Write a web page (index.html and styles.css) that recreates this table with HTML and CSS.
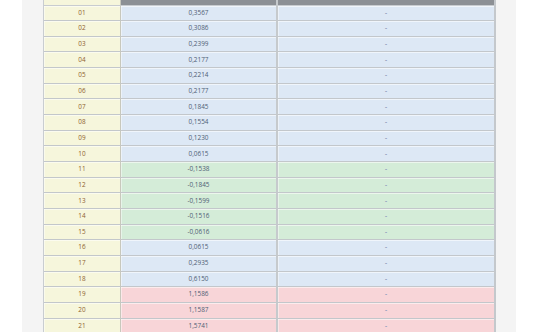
FILE: index.html
```html
<!DOCTYPE html>
<html>
<head>
<meta charset="utf-8">
<link rel="stylesheet" href="styles.css">
</head>
<body>
<div class="panel">
<table class="grid">
<thead><tr class="head"><th class="c1 h-blank"></th><th class="h-dark"></th><th class="h-dark c3"></th></tr></thead>
<tbody>
<tr class="blue"><td class="c1">01</td><td>0,3567</td><td class="c3">-</td></tr>
<tr class="blue"><td class="c1">02</td><td>0,3086</td><td class="c3">-</td></tr>
<tr class="blue"><td class="c1">03</td><td>0,2399</td><td class="c3">-</td></tr>
<tr class="blue"><td class="c1">04</td><td>0,2177</td><td class="c3">-</td></tr>
<tr class="blue"><td class="c1">05</td><td>0,2214</td><td class="c3">-</td></tr>
<tr class="blue"><td class="c1">06</td><td>0,2177</td><td class="c3">-</td></tr>
<tr class="blue"><td class="c1">07</td><td>0,1845</td><td class="c3">-</td></tr>
<tr class="blue"><td class="c1">08</td><td>0,1554</td><td class="c3">-</td></tr>
<tr class="blue"><td class="c1">09</td><td>0,1230</td><td class="c3">-</td></tr>
<tr class="blue"><td class="c1">10</td><td>0,0615</td><td class="c3">-</td></tr>
<tr class="green"><td class="c1">11</td><td>-0,1538</td><td class="c3">-</td></tr>
<tr class="green"><td class="c1">12</td><td>-0,1845</td><td class="c3">-</td></tr>
<tr class="green"><td class="c1">13</td><td>-0,1599</td><td class="c3">-</td></tr>
<tr class="green"><td class="c1">14</td><td>-0,1516</td><td class="c3">-</td></tr>
<tr class="green"><td class="c1">15</td><td>-0,0616</td><td class="c3">-</td></tr>
<tr class="blue"><td class="c1">16</td><td>0,0615</td><td class="c3">-</td></tr>
<tr class="blue"><td class="c1">17</td><td>0,2935</td><td class="c3">-</td></tr>
<tr class="blue"><td class="c1">18</td><td>0,6150</td><td class="c3">-</td></tr>
<tr class="pink"><td class="c1">19</td><td>1,1586</td><td class="c3">-</td></tr>
<tr class="pink"><td class="c1">20</td><td>1,1587</td><td class="c3">-</td></tr>
<tr class="pink"><td class="c1">21</td><td>1,5741</td><td class="c3">-</td></tr>
</tbody>
</table>
</div>
</body>
</html>
```

FILE: styles.css
```css
html, body {
  margin: 0;
  padding: 0;
  background: #ffffff;
  height: 100%;
  overflow: hidden;
}
.panel {
  margin-left: 22px;
  width: 473px;
  padding-left: 21px;
  min-height: 340px;
  background: #f4f4f4;
}
.grid {
  width: 453px;
  border-collapse: separate;
  border-spacing: 0;
  table-layout: fixed;
  font-family: "Open Sans", "DejaVu Sans", sans-serif;
  font-size: 6.4px;
  text-align: center;
  border-left: 1px solid #c9cdd1;
  border-right: 2px solid #c4c8cc;
}
.grid th, .grid td { padding: 0; }
.head th {
  height: 4.5px;
  border-bottom: 1px solid #c8ccd0;
}
.h-blank { background: #ffffff; }
.h-dark { background: #8c9095; }
.grid td {
  height: 14.67px;
  border-bottom: 1px solid #c3c7cb;
  box-shadow: inset 0 1px 0 rgba(255,255,255,0.55), inset 1px 0 0 rgba(255,255,255,0.45);
  color: #4e5d74;
  line-height: 1;
}
.c1 { width: 76px; }
.grid td.c1, .grid th.c1 {
  background: #f6f6dc;
  color: #8e5f2e;
  border-right: 1px solid #c8c8bc;
}
.grid td.c3, .grid th.c3 {
  width: 216px;
  border-left: 2px solid #c6cacd;
  color: #97a2c0;
  font-weight: 700;
}
.blue td { background: #dde8f5; }
.green td { background: #d4ecd8; }
.pink td { background: #f8d5d8; }
.blue td.c1, .green td.c1, .pink td.c1 { background: #f6f6dc; }
```
